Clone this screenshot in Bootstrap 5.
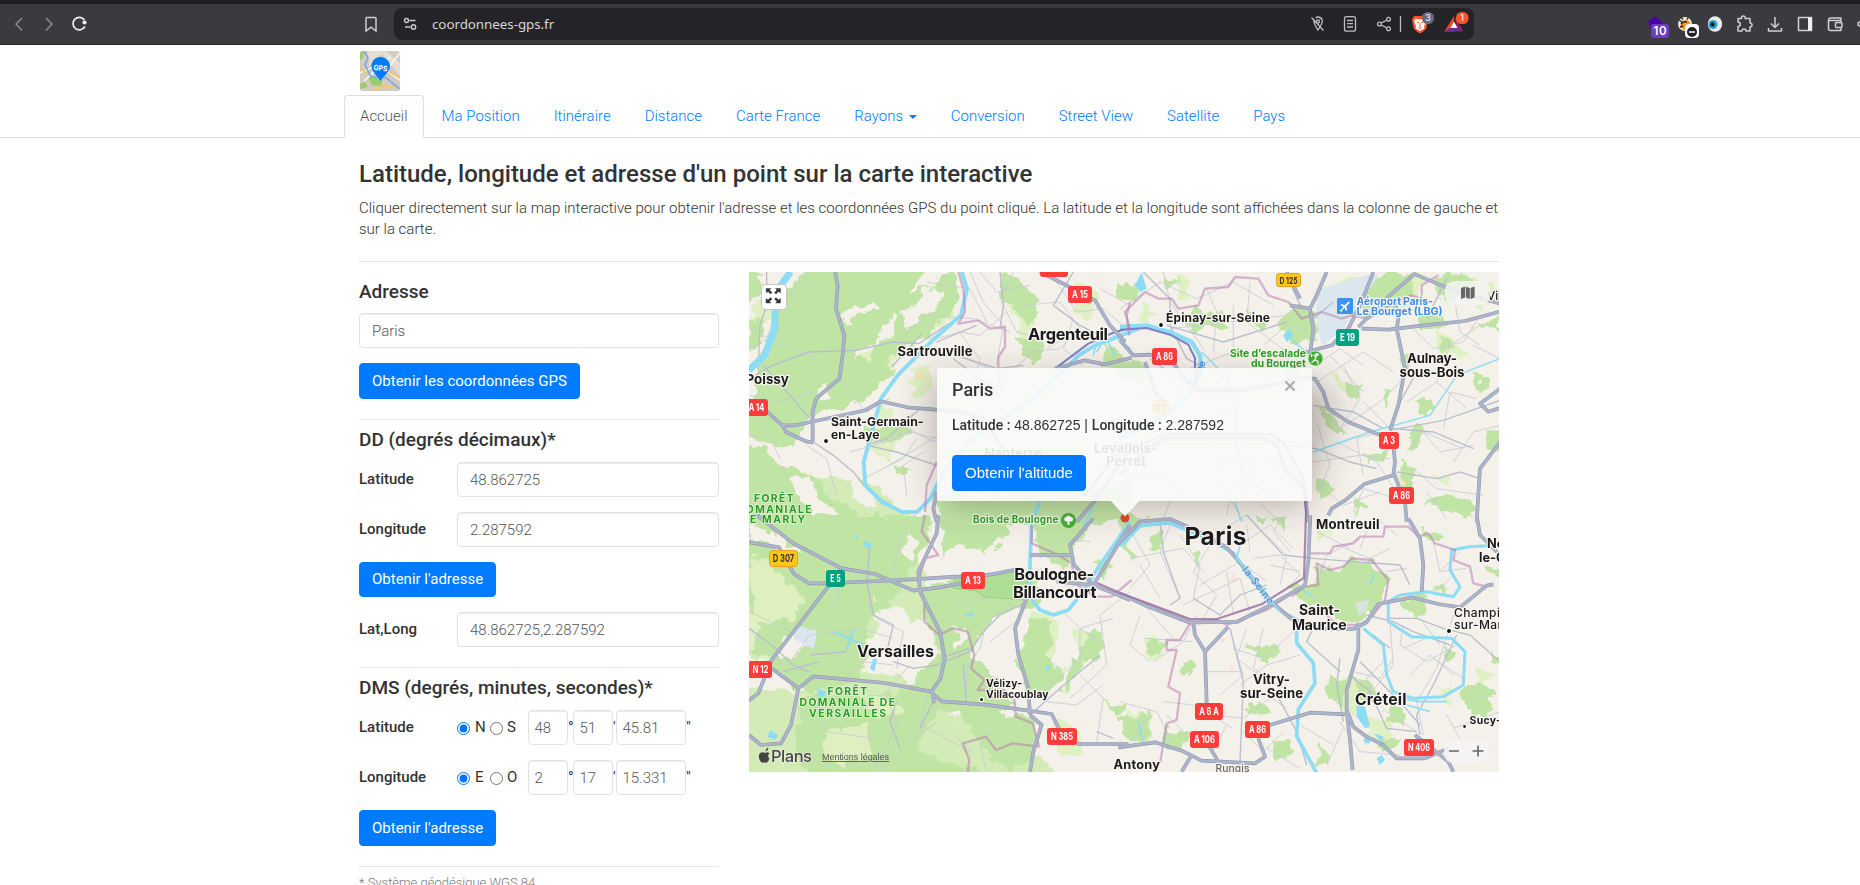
<!DOCTYPE html>
<html lang="fr">
<head>
<meta charset="utf-8">
<meta name="viewport" content="width=device-width, initial-scale=1">
<title>Coordonnées GPS</title>
<link href="https://cdn.jsdelivr.net/npm/bootstrap@5.3.0/dist/css/bootstrap.min.css" rel="stylesheet">
<style>
html,body{height:885px;overflow:hidden}
body{font:300 15px/21px Roboto,sans-serif;color:#333;background:#fff}
.browser{height:45px;background:#3b3a3f;border-top:4px solid #1f1e23;border-bottom:1px solid #2b2a2f}
.browser svg{display:block;flex:none}
.urlbar{width:1080px;height:32px;background:#242328;border-radius:8px;color:#d6d5da;font:400 13.4px/32px "Noto Sans",sans-serif}
.site{width:1170px;max-width:1170px;padding:0 15px;margin-left:344px}
.tabs{border-bottom:1px solid #ddd;height:93px;padding-top:6px}
.tabs .nav{margin-left:-15px;height:43px;border:0}
.tabs .nav-link{border:1px solid transparent;border-radius:4px 4px 0 0;padding:10px 15px;height:43px;margin:0 2px 0 0;color:#007bff;line-height:21px;white-space:nowrap}
.tabs .nav-link.active{color:#555;background:#fff;border-color:#ddd #ddd #fff}
.caret{display:inline-block;border:4px solid transparent;border-top-color:#007bff;border-bottom:0;margin-left:2px;vertical-align:2px}
h1{font-size:24px;line-height:26px;font-weight:500;margin:23px 0 11px}
h2{font-size:19px;line-height:20px;font-weight:500;margin:0 0 12px}
.rule{height:1px;background:#e5e5e5;margin:20px 0 10px}
.form-control{height:35px;border:1px solid #e2e2e2;border-radius:4px;padding:6px 12px;font-size:15px;font-weight:300;line-height:21px;color:#555;box-shadow:inset 0 1px 1px rgba(0,0,0,.075)}
.form-control.dms{padding:6px 5.5px}
.btn-primary{--bs-btn-bg:#007bff;--bs-btn-border-color:#007bff;--bs-btn-padding-x:12px;--bs-btn-padding-y:0;--bs-btn-font-size:15px;--bs-btn-border-radius:4px;--bs-btn-font-weight:400;height:35.4px;line-height:31px;display:block}
.line{height:35px;margin-bottom:15px}
.line label{width:98px;font-weight:500;line-height:34px;height:35px}
.line input[type=radio]{width:13px;height:13px;margin:2px 0 0;flex:none}
.line span{font-weight:400;flex:none;line-height:35px}
.mapbox{width:750px;height:500px;margin-top:10px;overflow:hidden}
.mapbox>svg{display:block}
.popup{left:188px;top:96px;width:375px;height:133px;background:rgba(250,250,250,.91);border-radius:4px;padding:12px 15px;font:14px/20px "Liberation Sans",sans-serif;color:#333}
.popup b{font:500 14px Roboto,sans-serif}
.popup .ttl{font:500 18px/20px Roboto,sans-serif;margin-bottom:15px}
.popup .btn{width:134px;padding:0;font:15px/32px "Liberation Sans",sans-serif;margin-top:20px;height:36px}
.full{left:11.5px;top:11.5px;width:26.5px;height:26.5px;background:#fff;border:1px solid #c4c4c4;border-radius:4px}
.full svg{margin:-.5px 0 0 -.8px}
.pill{width:45px;height:24px;border-radius:9px;background:rgba(245,245,243,.86)}
.brandline{left:8px;top:474px}
svg text{font-family:Inter,"Noto Sans",sans-serif}
.lab text{fill:#1b1b1d;font-weight:650;stroke:#f8f5f0;stroke-width:2.4px;stroke-linejoin:round;paint-order:stroke}
.lab .wood{fill:#289b22;font-weight:700;stroke:#e8f6da;stroke-width:1.6px}
.lab .poi{fill:#2f9d27;stroke:#f2f9e9}
.lab .air{fill:#3d8eea}
.shield text{fill:#fff;font-size:10.4px;font-weight:700;text-anchor:middle}
</style>
</head>
<body>
<header class="browser d-flex align-items-start">
<svg width="394" height="40" viewBox="0 4 394 40" fill="none">
<g stroke="#8a898e" stroke-width="1.5"><path d="M22 18l-6 6 6 6.500M46 18l6 6-6 6.500"/></g>
<path d="M84.500 20a6.300 6.300 0 1 0 .4 6.500" stroke="#eee" stroke-width="1.7"/><circle cx="84.500" cy="22.500" r="2.100" fill="#eee"/>
<path d="M366.500 17.500h8.500q1 0 1 1v12.500l-5-3.800-5 3.800v-12.500q0-1 .5-1z" stroke="#d0cfd4" stroke-width="1.500"/>
</svg>
<div class="urlbar d-flex" style="margin-top:4px">
<svg width="38" height="32" viewBox="394 8 38 32" fill="none" stroke="#c9c8cd" stroke-width="1.400"><circle cx="406.500" cy="20.500" r="2"/><path d="M409.500 20.500h6M405 27h5.500"/><circle cx="413.500" cy="27" r="2.200"/></svg>
<span style="letter-spacing:-.06px">coordonnees-gps.fr</span>
<svg class="ms-auto" width="174" height="32" viewBox="1300 8 174 32" fill="none">
<g stroke="#bcbbc0" stroke-width="1.300"><path d="M1311.500 17.500l12 13M1314 19q-1 4 4 11 5-7 4.200-10-1-3-4.200-3-1.500 0-2.500.7"/><circle cx="1318" cy="21.500" r="1.500"/><rect x="1344.500" y="16.700" width="11" height="14.500" rx="2"/><path d="M1347 20.500h6M1347 23.700h6M1347 27h6"/><circle cx="1379.500" cy="24" r="1.900"/><circle cx="1388.500" cy="19.300" r="1.900"/><circle cx="1388.500" cy="28.700" r="1.900"/><path d="M1381.200 23l5.500-2.800M1381.200 25l5.500 2.800M1400.500 16v16"/></g>
<path d="M1414 16h11l3 3.500-1.500 8.500q-2 3.500-6.500 5.500-4.500-2-6.500-5.500l-1.500-8.500z" fill="#fb542b"/><path d="M1415.500 18.500l4.500 1 4.500-1 1.500 3-2 5 .5 2-4.500 2.500-4.500-2.500.5-2-2-5z" fill="#fff"/><path d="M1417 22l2 .8M1423 22l-2 .8M1420 23v4M1418.500 27.500l1.500 1 1.500-1" stroke="#fb542b"/>
<rect x="1422" y="12" width="12" height="12" rx="5.500" fill="#66697a"/><text x="1428" y="21.300" font-size="9" fill="#fff" text-anchor="middle">3</text>
<path d="M1454 16l-9.500 15.500h9z" fill="#ff4724"/><path d="M1454 16l9.500 15.500-6-3z" fill="#9e1f63"/><path d="M1444.500 31.500l5-3.500h8l6 3.500z" fill="#662d91"/><path d="M1454 21.500l-3.500 6.500h7z" fill="#fff"/>
<rect x="1456" y="12" width="12.500" height="12" rx="5.500" fill="#fb542b"/><text x="1462.200" y="21.300" font-size="9" fill="#fff" text-anchor="middle">1</text>
</svg>
</div>
<svg class="ms-auto" width="230" height="40" viewBox="1630 4 230 40" fill="none">
<path d="M1655 16l8.500 7h-2v5h-12v-5h-2.500z" fill="#4b00a8"/><rect x="1651" y="24" width="18" height="14" rx="3" fill="#6b3fc0"/><text x="1660" y="35.400" font-size="11.500" font-weight="600" fill="#fff" text-anchor="middle" textLength="13">10</text>
<circle cx="1685" cy="24" r="7" fill="#eceae5"/><circle cx="1685.500" cy="25" r="5" fill="#f0941f"/><path d="M1679 20l3 2M1681 17.500l2 2M1688 17.500l-1 2M1680 27l3-1M1681 24q2-3 6-2" stroke="#2b2523" stroke-width="1.400"/><rect x="1685" y="24" width="14" height="14" rx="4" fill="#fff"/><circle cx="1692" cy="32" r="5" fill="#222"/><path d="M1689 32h6" stroke="#fff" stroke-width="1.500"/>
<ellipse cx="1715" cy="24" rx="7.200" ry="7.800" fill="#e9ebec"/><circle cx="1713" cy="24.500" r="4.600" fill="#27a5dc"/><circle cx="1712.500" cy="24.500" r="2.200" fill="#10202b"/>
<g stroke="#d0cfd4" stroke-width="1.500" stroke-linejoin="round"><path d="M1738 18.500h3.500q-.3-2.500 1.800-2.500t1.800 2.500h4.900v4.500q2 0 2 2t-2 2v4h-4q0-2-2-2t-2 2h-4v-4.500q2.300-.2 2.300-2.200t-2.300-2.200z"/><path d="M1775 17v10.500m-4-4l4 4 4-4M1768.500 28v3h13v-3"/><rect x="1798.500" y="17.500" width="13" height="13"/><path d="M1841 20v-2h-10q-2.500 0-2.500 2v8.500q0 2 2 2h10.500v-2.500M1829 20.500h12v3"/><rect x="1835.500" y="22.500" width="6.500" height="5" rx="1"/><circle cx="1860" cy="24" r="2"/></g><rect x="1808" y="17.500" width="4" height="13" fill="#f0f0f0"/>
</svg>
</header>
<div class="tabs">
<div class="container site">
<svg class="d-block" width="41" height="40" viewBox="0 0 41 40" style="margin:0 0 4px 1px"><defs><clipPath id="r"><rect width="40" height="40" rx="3"/></clipPath></defs><g clip-path="url(#r)" fill="none"><path fill="#d3cbbf" d="M0 0h41v40H0z"/><path fill="#e5ded2" d="M8 0h18l14 12v13L22 3 9 15z"/><path fill="#9ccb6b" d="M8 27l7-2 8 3-2 7-9-1zM0 33l5-2 3 5-8 2zM0 0h4l-1 7-3 2z"/><path stroke="#fff" stroke-width="1.300" d="M40 2L24 22M0 22l18-8 23 16M4 30L30 6"/><path stroke="#f5c859" stroke-width="1.600" d="M0 17l9 7M29 21l12 6M14 39l9-4h10l8 2"/><path stroke="#7ba8ee" stroke-width="1.700" d="M4 0l4 7-3 7 6 12 14 0 15 12"/></g><path fill="#007bff" d="M20.500 6c5.500 0 9.500 4 9.500 9 0 6-7 10-9.500 15C18 25 11.500 21 11.500 15c0-5 3.500-9 9-9z"/><text x="20.500" y="19.600" font-size="7.500" font-weight="700" fill="#fff" text-anchor="middle" textLength="14" lengthAdjust="spacingAndGlyphs" transform="rotate(6 20 17)">GPS</text></svg>
<ul class="nav nav-tabs flex-nowrap">
<li class="nav-item"><a class="nav-link active">Accueil</a></li><li class="nav-item"><a class="nav-link">Ma Position</a></li><li class="nav-item"><a class="nav-link">Itinéraire</a></li><li class="nav-item"><a class="nav-link">Distance</a></li><li class="nav-item"><a class="nav-link">Carte France</a></li><li class="nav-item"><a class="nav-link">Rayons <i class="caret"></i></a></li><li class="nav-item"><a class="nav-link">Conversion</a></li><li class="nav-item"><a class="nav-link">Street View</a></li><li class="nav-item"><a class="nav-link">Satellite</a></li><li class="nav-item"><a class="nav-link">Pays</a></li>
</ul>
</div>
</div>
<main class="container site">
<h1>Latitude, longitude et adresse d'un point sur la carte interactive</h1>
<p class="m-0">Cliquer directement sur la map interactive pour obtenir l'adresse et les coordonnées GPS du point cliqué. La latitude et la longitude sont affichées dans la colonne de gauche et sur la carte.</p>
<div class="rule mb-0" style="margin-top:21px"></div>
<div class="row" style="--bs-gutter-x:30px">
<div class="col-4">
<h2 style="padding-top:20px;margin-bottom:11px">Adresse</h2>
<input class="form-control" style="margin-bottom:15px" value="Paris">
<button class="btn btn-primary" style="height:36px">Obtenir les coordonnées GPS</button>
<div class="rule"></div>
<h2>DD (degrés décimaux)*</h2>
<div class="line d-flex"><label>Latitude</label><input class="form-control flex-fill w-auto" value="48.862725"></div>
<div class="line d-flex"><label>Longitude</label><input class="form-control flex-fill w-auto" value="2.287592"></div>
<button class="btn btn-primary" style="margin-bottom:15px">Obtenir l'adresse</button>
<div class="line d-flex mb-0"><label>Lat,Long</label><input class="form-control flex-fill w-auto" value="48.862725,2.287592"></div>
<div class="rule"></div>
<h2>DMS (degrés, minutes, secondes)*</h2>
<div class="line d-flex align-items-center"><label>Latitude</label><input type="radio" name="ns" checked><span style="width:20px;padding-left:5px">N</span><input type="radio" name="ns"><span style="width:25px;padding-left:4px">S</span><input class="form-control dms" style="width:40px" value="48"><span style="width:5px">°</span><input class="form-control dms" style="width:40px" value="51"><span style="width:3px">'</span><input class="form-control dms" style="width:70px" value="45.81"><span>"</span></div>
<div class="line d-flex align-items-center"><label>Longitude</label><input type="radio" name="eo" checked><span style="width:20px;padding-left:5px">E</span><input type="radio" name="eo"><span style="width:25px;padding-left:4px">O</span><input class="form-control dms" style="width:40px" value="2"><span style="width:5px">°</span><input class="form-control dms" style="width:40px" value="17"><span style="width:3px">'</span><input class="form-control dms" style="width:70px" value="15.331"><span>"</span></div>
<button class="btn btn-primary">Obtenir l'adresse</button>
<div class="rule"></div>
<div style="font-size:13px;line-height:12px;color:#777">* Système géodésique WGS 84</div>
</div>
<div class="col-8">
<div class="mapbox position-relative">
<svg width="750" height="500" viewBox="749 272 750 500" fill="none">
<defs>
<filter id="rough" x="-5%" y="-5%" width="110%" height="110%"><feTurbulence type="fractalNoise" baseFrequency=".07" numOctaves="3" seed="4"/><feDisplacementMap in="SourceGraphic" scale="17" xChannelSelector="R" yChannelSelector="G"/></filter>
<filter id="soft" x="-30%" y="-30%" width="170%" height="170%"><feGaussianBlur stdDeviation="17"/></filter>
<g id="main">
<g transform="translate(740 262) scale(.33333)"><path d="M285 30l8 40-5 70 25 80-5 60-10 70-70 60-10 40v90M27 445h50l50 45h40l210-45 45-27 80 18 150 12 75 20 60 90M128 490l10 20 60 28 22 4M590 690l-10 50 10 40M900 30l110 55 55 30 45 75 45 50M945 320l90-25 60 12 80-20M1170 560l-100 150-60 70"/></g>
<g transform="translate(1120 262) scale(.33333)"><path d="M0 235l40 45 50-2 60 12 60 80 30 15h130l170-35 45 0 25 40 15 50 60 40 110 45 25 25 5 50-5 40-85 25-60 50-40 25-10 20M620 30l-30 70-20 40-60-10M540 110l-40-80M570 142l10 60-8 60M725 200l80 3 100-12 130-14 105-28M820 110l15 60-5 30 25 120-20 110-25 75M760 30l-35 90-40 80-50 50-110 30M885 35l-70 60-100 100M880 35l120 50 140 40M1140 380l-60 45 25 24 32-10M820 630l35 90 5 60M1140 540l-60 80-10 160M0 640l60-60 70-50h300l40 20 30 80 55 50 8 100M75 300l35 100 20 10"/></g>
<g transform="translate(740 515) scale(.33333)"><path d="M27 82l90 15 45 80 45 28h40l170-7 100-5 130-8h60l65-10 60-12M50 0l110 85 145 75 100 17 115 50 80-10 130-25M300 165l-40 55-165 215-40 100-30 22M95 460l80 60-22 110-30 55-60 5-36-30M175 520l45-36 215 20 135 25 35 30 130 10 130 18 70 10 20 40 25 30 35 20h150M595 0l-5 55-55 115 5 60 60 120 14 80-12 60-25 35 5 40M870 600l35 30-25 80-10 60M860 250l-35 90 10 80 30 100 5 80M1170 30l-110 180-110-10M1060 10l-70 80 12 60 58 60 110 45M870 120h130"/></g>
<g transform="translate(1120 515) scale(.33333)"><path d="M0 80L60 20l90-8 80 35 90 50 60 70 80 100 55 45 85 30h100l40-20 35-55 100-20 80 20 65 10 80-65 20-4M0 235l80 38 130 50 80-2h60l90-45 115-65 10-70 6-140M220 320l5 40 30 50 5 150v40M325 335l-70 75M715 325v80l-35 120v60l20 50 40 30 50 25 40 40h85l70-30M680 585l10 90 8 90M450 630l120-37 105 5M415 670l20 55-30 20-160-8-60-30-80-25-110 15M265 690l30 50M865 10l35 60 10 80-5 80M1070 0l10 60 60 60M885 660l100 80 15 30M215 720l-30 50"/></g>
</g>
</defs>
<path fill="#f4f0ea" d="M749 272h750v500H749z"/>
<g filter="url(#rough)" fill="#dff0c2">
<path d="M735 480h130l40 30 25 20-10 30 10 60-50 12-45 20-50-20-30 30-20-20zM735 690h60l40-20 60 5 60 40 70 15 30 50H735z" fill="#d3ebb6"/>
<g transform="translate(740 262) scale(.33333)"><path d="M60 60l60 30-20 90-60 20zM340 290l80-40 60 30-80 100-80 20zM520 310l50 10 10 50-60 40zM400 430l60 20-30 60zM780 90l50 20 60 80-30 40zM1010 60l70 40-30 70-60-20zM600 90l50 0-10 90-50 20zM420 480l60 50-30 60-60-20zM0 560h60l30 60-60 30z"/></g>
<g transform="translate(1120 262) scale(.33333)"><path d="M610 80l80-40 50 10-30 90-80 40zM790 60l70-30 60 20-50 80-80 20zM160 40l50 20 0 60-40-20zM540 200l40 20-10 40zM930 200l60 30 60 60-90-20zM620 330l50 20 10 60zM1000 50h80l60 40-60 60zM940 640l60 0-10 40zM60 120l50 40-40 20z"/></g>
<g transform="translate(740 515) scale(.33333)"><path d="M20 60l90 80 90 80 60 60-50 130-110 50-90-80zM420 270l60 0 20 60-50 20zM880 280l80 40-20 110-70-10zM1000 330l70 50-20 80zM620 420l60 0 20 60zM930 620l90 20 0 70-60 20z"/></g>
<g transform="translate(1120 515) scale(.33333)"><path d="M70 370l70 0 0 60-60 10zM20 580l80 20 0 70-80 10zM620 500l70-20 60 80-60 50zM840 240l80-10 0 60zM1060 460l70 20-50 30zM740 600l80 30-10 60-60-20zM960 520l50 10-30 40zM600 30l30 20-30 40z"/></g>
</g>
<g filter="url(#rough)" fill="#c0e4a4">
<g transform="translate(740 262) scale(.33333)">
<path d="M240 0h340l-50 70-100 130-20 45-60 20-40 80-50 60-60 90-50 70-130-40-50-70 70-60 20-100 40-110 10-90zM170 440l60-60 120-100 110 40-70 80-130 50zM0 560l70-10 40 60 120 30 30 60 60 30 80 60H0zM480 110l90-40 70-40 20 90-90 100-110 60-60 80-50 0 60-110 50-30zM380 500l70-20 60 20-50 40-70 0zM780 30l70 30 40 70-30 60-80-90zM0 30l70 10-30 70-40 10zM30 180l50 10-20 60-40 20zM830 210l50 20 40-10-20 70-30 20zM700 340l60 20 10 40-50 10zM470 600l50 20-20 30-40-10zM600 700l300-10 150 20 120-60v130H600zM1090 260l60 20 20 60-80-30z"/>
<path fill="#f4f0ea" d="M300 160l50-40 80 10-70 20-40 30zM480 150l50-20 40-60 40 10-20 60-60 30-40 40zM230 390l20-20 20 40-30 10zM150 660l60-20 20 60 60 50-70 20zM330 640l60 40 20 60-60-20z"/>
</g>
<g transform="translate(1120 262) scale(.33333)"><path d="M0 60l60 20-30 40-30-10zM130 40l40 20-30 20zM190 170l40-30 80 20 20 40-60-10-40 20zM380 150l40 10 20 40-50-10zM470 180l70-50 60 20-10 80-80 20zM730 80l60-50h90l-10 70-90 60-60 20zM920 50l80-20 70 30-20 40-90 10zM880 140l60 10 50 40-80 20zM840 270l30 20-10 60zM600 100l50-10 10 40zM680 360l40 10-10 40-40-20zM780 380l40 20-20 40zM880 420l40-10 30 30-40 20zM600 440l60 30 10 50-50-30zM880 490l20 10-10 60-20 10zM730 580l60-20 10 30-50 20zM840 600l50 20-20 80-20-20zM960 220l40 30-30 30zM1050 330l60 30-20 40zM910 720l40-20 100 10 30 50-120-20zM1090 500l50 10v60h-30zM590 650l50 20-40 50zM700 700l40 30-30 30zM490 320l60 10-10 50-40-10zM20 300l60 20-10 50-60-20zM1080 180l60-20v60z"/></g>
<g transform="translate(740 515) scale(.33333)">
<path d="M0 0h560l10 90-60 80-60 100-80 60 20 90-40 80-130 30-100-40-30-120-90-130-40-30zM540 230l80-30 180-20 90 20 10 60-100 30-90 80-30 70-70 0-40-90zM590 420l70-10 100 60 60 100-80 30-140-20-40 60-80-10 20-100zM200 540l180 0 120-20 60 80-30 100 110 50h90l-10 60H270l-90-60-20-100zM100 200l160 30-70 110-80 90-80-10zM870 0h180l-10 50-60 110-90-50zM600 0h220l-20 60-70 60-90-30-30 40zM880 310l60 10-20 100 50 60-70 70-50-40-20-100zM650 580l120 10 120 30v110l-90 40-70-60-40-80zM1040 360l60-20-20 90-60 20zM1060 130l50 20-20 40zM990 430l40 20-60 90zM1090 560l60 10-10 40z"/>
<path fill="#dff0c0" d="M30 120l60 20 50 70 60 40-50 60-110 20zM250 650l120-20 30 90-90 40-70-40zM380 540l90 10 10 50-70 10z"/>
<path fill="#f4f0ea" d="M30 30l70 20 80 60-60-10-90-30zM430 280l50-10 40 50-20 50-50 10-40-60zM470 400l100-20 30 50-90 60-60-30zM100 400l80-60 50 50-90 40zM640 330l50 30-40 50zM480 110l30-60 30 20-20 60zM740 390l40-30 40 50-50 20z"/>
</g>
<g transform="translate(1120 515) scale(.33333)"><path d="M590 150l40 15 40-10 20-20 60 5 50 50-5 50-40 50-40 30-70 0-60-50-70-30-10-30 70 0zM0 30l20-30 60 10-60 50zM90 60l30-10 10 50-30 10zM210 120l30-10-10 40zM450 20l50-10-10 40zM0 60l60 60-20 10-50-30zM80 380l60-10-10 50-50-10zM380 390l50 10 50-10 10 20-60 30zM370 580l60-20 20 30-60 10zM0 610l90-20 10 60-50 30-50-10zM130 640l80 20-30 50-50-20zM620 480l60 10-10 80-50-20zM700 490l60 10 20 60-50 10zM850 250l60-10 10 50-50 10zM930 200l50 10-10 40zM1020 530l50-30 50 20-20 90-60-20zM1090 150l50 10v50zM460 680l50-10 10 50-50 20zM600 690l40 30-10 40h-50zM780 660l60 10-20 50-60-20zM820 560l40 20-10 50-60-10zM900 40l60 20-20 20zM180 440l40 10-20 40zM400 0l40 10-20 20zM980 400l30 20-30 10zM1100 400l40 30v20z"/></g>
</g>
<path fill="#aedd96" stroke="#8fcd7c" stroke-width=".8" d="M955 577l57-5 16 8-4 20-40-3-8-6-23-3z"/>
<path fill="#dbe6ef" d="M1317 290l50-15 12 0-35 53-22 18-6-28zM795 625l22 6-3 18-20-10z"/>
<path fill="#dbe1de" d="M1355 602l14-2-2 10-8 6z"/><path fill="#fbe0de" d="M1232 572l7 8-9 4zM1218 637l8 2-4 5zM1230 665l5 2-4 6z"/><path fill="#fbe2b9" d="M915 376l8-6 1 8zM1396 475l10 8-2 4zM1470 325l6 2-4 6zM873 594l4 8h-4z"/>
<g stroke="#c7cbd5" stroke-width=".8">
<g transform="translate(740 262) scale(.33333)" stroke-width="2.500"><path d="M27 200l200 90M0 290l80-60 20-60M210 30l-60 70-90 20M300 350l70 90 80-30M650 200l70 90-20 70M690 30l40 90 60 70-20 120M820 30l-40 80 50 100 80 20M850 130l110-10 60 80-100 60M650 280l150 60 70-60M480 230l80-70 140 10 110 40M560 60l130 20 50 100M400 540l110-30 80 20M430 620l100-60 60-40M370 650l120-60 40-60M500 700l-10-90 60-40M640 500l-60 40-110-60M950 60l60 90 80-10 70 60M1000 170l-30 90 60 50M200 550l60 40 30 110M30 400l90 20 100-30M60 470l60 120M1170 130l-90-50M860 270l100-10 60-60M330 570l140-40 50-80M720 30l50 60 100-20M590 230l70-20 60 10 80-70"/></g>
<g transform="translate(1120 262) scale(.33333)" stroke-width="2.500"><path d="M0 140l120-80 110 50 110-50 120 70M130 30l20 90 100 140M260 80l30 70-10 120M340 130v140l-160 60M390 60l-10 120 120 90M150 200l350-40M430 250l70-60 70 20M590 360l140-90 90 60M600 380l60 120 120-80 90-90M660 500l60-90-50-100M730 420l80 80M860 420l90-60 40-110 90-60M950 360l90 80M880 200l60 60 90-20 50-80M900 200l20-90M1000 90l20 120 60 40M910 510l50 60 100-20M650 540l120 60 60 90M580 600l140-20 90 10M590 660l80 70 110-40M700 750l30-70 100 30M880 620l70 60 140 20M920 690l60 80M730 640l-20-110 70-20M590 480l40 130-30 70M600 300l60-40 70 50M1000 600l60-90 80-20M860 570l50-60 120 50M630 280l100 110M1060 250l80 40M970 500l20-110 80 20M0 350l120-20 60 60M30 400l90 20 60 80 120-20M190 340l-30 110-80 60M220 540l60-80 100-10 100 80M350 480l20 90 140 60M280 540l60 120-20 100M250 620l130-30 90 90M290 640l80 140M0 640l120-10 70 70M160 690l-30 80M400 580l-20 110 90 80"/></g>
<g transform="translate(740 515) scale(.33333)" stroke-width="2.500"><path d="M380 80l10 200 20 30 80 40-20 110M490 30l20-30M500 40l-30 70-10 70M150 440l60-80 150-20 100 30M200 350l90-90 10-90M310 500l60-60 90 10M430 540l80-90M230 580l30 70 140 20M560 540l-20 90 60 30 90 50M440 540l30 90-70 140M680 540v-80l40-60 20-80 80-60M750 380l90-70M640 280l100-30M900 130l60-60 90 10M900 160l90 60 60-40M1170 230l-90 70 20 150-110 100M970 290l50 50v90l-110 100M1080 380l-60-40 100-30M1020 480l70 70-20 130M920 560l90 10 80-60M30 290l120 60M40 360l90 90M800 560l-60-90M780 620l-60 70 20 80M590 620l-80 60-90 90M640 660l60 50"/></g>
<g transform="translate(1120 515) scale(.33333)" stroke-width="2.500"><path d="M40 60l50 90-60 70M60 150l60 100M30 130l160-30 60 70M150 30l-30 80 60 140M180 60l60 90-20 100M270 90l-50 80 70 70-40 70M240 210l120-70 80 60M190 270l170-80 30 100M320 170l20 130M300 50l80-50M360 90l90-60 70 70M400 130l80-10 60 60-50 50M440 60l60 60-20 90M490 0l-30 50 50 60M450 150l90 20M380 30l10 80M60 300l-30 90 60 50M70 370l150 10M80 280l80 90M100 440l90-60 40-80M380 340l-30 90 80 60M430 340l-30 120 90 60M340 400l90 30 90-80M360 510l80-60 100-30M300 540l70-60-30-90M250 470h110M280 600l90 10 80-60 90-20M320 630l-40 80M360 640l70 70 60-60M440 540l60 40M600 180l20-60 100-50M650 90l100 40 60-30M720 100l30-80M590 50l100 50M830 60l-60-50M800 170l60-10M850 330l-10 60 80 50 90-50M810 330l10 120-80 100M900 310l60 80M850 400l90-40M870 480l60-60 70 60M1000 300l-50 160-60 100 20 100M940 430l90 60M940 80l20 90 80-10M960 170l60-60M1000 180l-60 60M700 470l80 20 40-60M760 550l-20-60 60-60M730 510l70 80 90 60M660 620l60 90 120 10M640 690l-100-60M620 750l50-110M440 700l100 60M130 560l90 10 120 70M140 600l60 60M30 680l60-80M0 560l110 30 40 80M1000 640l140-50M980 600l50 90M1040 560l60-20"/></g>
</g>
<g stroke="#b9bece" stroke-width="4">
<g transform="translate(740 262) scale(.33333)"><path d="M27 350l70-40 110-40 140-5 110-25 80 5 90-60M70 310l80 90 60 70M80 30v100l-20 60-5 130M220 540l60 40 60 50 50 60 80 50M590 440l-50 0-100 90-60 20M545 215l-90 100M780 30l10 100-10 70M650 280l120 40 80-10M1000 30l-60 100 80 60 80 40M640 290l120 90M590 240l120-50M380 550l90 20 120 40"/></g>
<g transform="translate(1120 262) scale(.33333)"><path d="M70 30l80 80v80l50 100 120 60 30 100v150M140 190l170 50 190-60M500 40l40 90M580 430l120 20 90 50M810 505l160-30 170-60M820 500l120 10 120 50M830 440l60-110M500 550l90 10 100 40 80 20M830 630l120 20 70-20 60 20M640 120l-60 50M980 50l-60 120M90 290l100 70M350 540l20 110 90 50"/></g>
<g transform="translate(740 515) scale(.33333)"><path d="M390 100l-10 100 20 100 60 30-20 80M210 420l110-10M130 470l110-30M27 340l80 60 50 50 50 20M460 440l60 20 70-10 100-40 40-60 50-50 80-40M680 570l-10-120M870 600l90-80 120-100M600 430l90-30M540 640l40-80M1070 650l50 20M470 560l-20 60 30 80"/></g>
<g transform="translate(1120 515) scale(.33333)"><path d="M120 20l10 90 50 140-30 20M380 0l110 120 90 10 120 10 140 10 30 60M220 250l80 50 60-60 80-30M590 320l-30 60 100 90M740 300l80 20 60 30 110 40M800 310l90 0 80 30 80 20 90 80M690 480l60 50 50 110 90 10M460 520l70 130 30 100M330 340l40 160-10 240M760 360l50 40M660 430l-10 80 20 110M720 440l60 60 60 60 60 70M1010 360l-70 150-50 90 10 60"/></g>
</g>
<g stroke="#8ddcf6" stroke-linejoin="round">
<g transform="translate(740 262) scale(.33333)"><path stroke-width="21" d="M152 30l-45 60-3 110-30 80-48 45"/><path stroke-width="12" d="M665 30l16 50-18 80-80 70-110 110-50 70-22 80-30 110 5 70 50 50 60 30 45 0 40-40 45-90 70-80 180-120 90-80 60-60 50-30 130-50"/><path stroke-width="5" d="M1070 240l-10 40M1095 220l30 60M1120 220l50 40M1100 220l-30 50"/></g>
<path d="M945 320l100-75 80-35 60-15" transform="translate(740 262) scale(.33333)" stroke="#7e7fc4" stroke-width="6"/>
<g transform="translate(1120 262) scale(.33333)"><path stroke-width="13" d="M0 195l80-5 70 20 65 30 25 40 5 50-40 70-60 50-60 40-90 40"/><path stroke="#7e7fc4" stroke-width="6" d="M0 203l80-5 70 20 55 30 20 40 0 40"/><path stroke-width="4" d="M245 270l80 80 30 130M345 720l20 60M1140 290l-130 50-80 120-180 50-170 60M500 220l70 60"/><path fill="#8ddcf6" stroke="none" d="M45 70l20-40 15 50-20 10zM490 220l20-20 10 20-20 20z"/></g>
<g transform="translate(740 515) scale(.33333)"><path stroke-width="11" d="M900-40l-25 60-5 120 0 60 10 60 20 25 40 15 45-15 40-50 55-85 90-130"/><path stroke-width="6" d="M280 350l90 40M340 345l-20 60M1060-20l-30 50 10 10"/><path stroke="none" fill="#8ddcf6" d="M340 60h15l-5 15zM375 75l20 15-5 12-18-10zM670 300l30-10-5 15zM390 460l10-30 12 3-10 37zM90 645l25 15-10 15-22-10zM230 520l30 10-20 30zM920 450h10v15h-10z"/></g>
<g transform="translate(1120 515) scale(.33333)"><path stroke-width="11" d="M0 92L60 32l90-8 110 45 80 45 45 65 65 80 50 40 30 15 0 70 50 60 5 60-50 80-5 80 60 110 40 30"/><path stroke-width="9" d="M1140 90l-90 5-55 10-5 60 30 50-20 30-80-15-80 10-35 20 0 60 70 45 120 5 40 40-5 100-60 35-90 5-60-20-20-50-10-90-60-50"/><path stroke-width="5" d="M840 550l60 10 80 0M860 570l70 20M55 620l15 60M540 220l40 25M350 130l10-40M760 180l-10 30"/><path stroke="none" fill="#8ddcf6" d="M710 570l25 5 15 60-15 5-25-35zM770 730l15-10 10 15-15 15zM730 670h20v15h-15zM760 655l30 10-5 15z"/></g>
</g>
<g stroke="#b876b0" stroke-width="7" stroke-opacity=".5" stroke-linejoin="round">
<g transform="translate(740 262) scale(.33333)"><path d="M655 30l15 50 5 70-20 35 60-10 35 25 45-5v60l-20 30v50l10 50M1170 120l-10 40 8 60M590 600l-30 70-5 80"/></g>
<g transform="translate(1120 262) scale(.33333)"><path d="M30 200l-15-50 60-60 40 20h40l20 30 60-10 20-50 70-5 20-30 70 5 30 50 60 20 40 50 60-20 60 20 30-10 50 10 80-50 50-20 30 10 0-40 50-30"/></g>
<g transform="translate(740 515) scale(.33333)"><path d="M555 0l-10 50 50 70-40 10-20 70 18 60 0 60 45 40 40-20 45 10 20 70-10 40 40 35-20 30 80 0 30 30 5 50 50 20 20 70-80-10-50 20-30-40-70 20 20 50-10 80-50-10-50 20-60 50M875 30l0 55 70 30 50 30 10 60 60 40h50l60-50"/></g>
<g transform="translate(1120 515) scale(.33333)"><path d="M570 115h60l10-20 60-10 20-20 70 0 5-30 70 0 30 30 30-10 20 30 60 20-5 30 50 20 10 50 40 10M515 245l40-30 40-5-5-65 40 20 40-10 25-25 60 5 50 60-10 60-40 50-35 25h-70l-30-30M0 235l220 85 75-5 25 15 120-45 100-65M210 325l-30 50-40 0v30h30l-25 110 35 20-10 80-30 10-20 120"/></g>
</g>
<use href="#main" stroke="#8d98b3" stroke-width="11" stroke-linejoin="round"/>
<use href="#main" stroke="#aeb5ca" stroke-width="7.500" stroke-linejoin="round"/>
<path d="M1124 544l17-19 28-3 26 10M1236 557l18 22 26 33" stroke="#8ddcf6" stroke-width="2"/>
<g stroke="#93669c" stroke-opacity=".75" stroke-width="2.200"><path d="M1097 583l23 10 70 26 27 0 45-15 42-26 2-66-3-35-19-33-12-10H1165l-50 22-30 40"/></g>
<circle cx="1125" cy="518" r="4.500" fill="#e0482d"/>
<g class="lab">
<text x="1028" y="339.700" font-size="16.500" textLength="80">Argenteuil</text><text x="897.500" y="355.500" font-size="13" textLength="75">Sartrouville</text><text x="745.500" y="383.500" font-size="13.500" textLength="43.500">Poissy</text><text x="831" y="425.500" font-size="12.200" textLength="92.500">Saint-Germain-</text><text x="831" y="438.700" font-size="12.200" textLength="48.500">en-Laye</text><text x="1166" y="322" font-size="12" textLength="104">Épinay-sur-Seine</text><text x="1407" y="363.300" font-size="13.300" textLength="50">Aulnay-</text><text x="1399.500" y="376.800" font-size="13.300" textLength="65">sous-Bois</text><text x="1487" y="300" font-size="11.500" style="font-weight:500">Villepinte</text>
<text class="air" x="1356.500" y="304.500" font-size="10.800" textLength="76.500">Aéroport Paris-</text><text class="air" x="1356.500" y="315.200" font-size="10.800" textLength="86">Le Bourget (LBG)</text>
<text class="poi" x="1230" y="356.500" font-size="10.600" textLength="76">Site d’escalade</text><text class="poi" x="1251" y="367" font-size="10.600" textLength="55">du Bourget</text>
<text class="poi" x="973" y="523" font-size="10" textLength="85.500">Bois de Boulogne</text>
<text class="wood" x="754" y="501.700" font-size="10.300" textLength="39.500">FORÊT</text><text class="wood" x="737" y="512.500" font-size="10.300" textLength="74.500">DOMANIALE</text><text class="wood" x="741" y="523.300" font-size="10.300" textLength="64">DE MARLY</text>
<text class="wood" x="827.500" y="695" font-size="10.300" textLength="39.500">FORÊT</text><text class="wood" x="799.500" y="706" font-size="10.300" textLength="95.500">DOMANIALE DE</text><text class="wood" x="809" y="717" font-size="10.300" textLength="77">VERSAILLES</text>
<text x="1014.300" y="580" font-size="16.500" textLength="80">Boulogne-</text><text x="1013" y="597.500" font-size="16.500" textLength="83.500">Billancourt</text><text x="857" y="656.700" font-size="16" textLength="77">Versailles</text><text x="986" y="686.700" font-size="10.400" textLength="36">Vélizy-</text><text x="986" y="697.700" font-size="10.400" textLength="62.500">Villacoublay</text><text x="1113.500" y="769" font-size="12.800" textLength="46.500">Antony</text>
<text x="1184.500" y="545" font-size="24.500" textLength="62" style="font-weight:750">Paris</text><text x="1316" y="528.500" font-size="13.200" textLength="63.500">Montreuil</text><text x="1299" y="615" font-size="14" textLength="41">Saint-</text><text x="1292" y="630.300" font-size="14" textLength="54.500">Maurice</text><text x="1454" y="616.500" font-size="12" letter-spacing=".4" style="font-weight:500">Champigny-</text><text x="1454" y="629.300" font-size="12" letter-spacing=".4" style="font-weight:500">sur-Marne</text><text x="1487" y="548" font-size="12.800">Neuilly-</text><text x="1479" y="562" font-size="12.800">le-Grand</text><text x="1253" y="684" font-size="13.200" textLength="37">Vitry-</text><text x="1240" y="698" font-size="13.200" textLength="63">sur-Seine</text><text x="1355" y="705.300" font-size="15.800" textLength="51.500">Créteil</text><text x="1469.500" y="724" font-size="10.300" letter-spacing=".4">Sucy-en-Brie</text><text x="1215.500" y="771.700" font-size="10.300" textLength="34" style="fill:#666;font-weight:500">Rungis</text>
<text x="984.500" y="457.500" font-size="13.200" textLength="57">Nanterre</text><text x="1094" y="452.700" font-size="13" textLength="63">Levallois-</text><text x="1106" y="466.300" font-size="13" textLength="40">Perret</text>
<text transform="translate(1242 570) rotate(52)" font-size="9.800" textLength="44" style="fill:#3f86c9;stroke:#cfeaf5;stroke-width:1px;font-weight:500">la Seine</text><text transform="translate(1195 386) rotate(-65)" font-size="9.800" textLength="26" style="fill:#3f86c9;stroke:none;font-weight:500">Seine</text>
</g>
<g fill="#111" stroke="#fff" stroke-width="1.200"><circle cx="826" cy="441" r="2.500"/><circle cx="1161" cy="325" r="2.500"/><circle cx="981.500" cy="699.500" r="2.100"/><circle cx="1449" cy="631" r="2.600"/><circle cx="1464.500" cy="726.500" r="2"/></g>
<rect x="1337" y="298" width="16" height="16" rx="1.500" fill="#3d94f0"/><path d="M1341 310l2.500-3.200-3.200-1.600 1-1 3.800.8 2.600-2.700q1.300-1 1.900-.6.500.7-.6 1.900l-2.700 2.600.8 3.800-1 1-1.600-3.200-2.500 2.600-.2 1.300-.6.300-.6-1-1-.6.300-.6z" fill="#fff"/>
<circle cx="1315.500" cy="358.500" r="7.500" fill="#42ae36" stroke="#eaf7e2" stroke-width=".7"/><path d="M1313 355l3 1.500 3-2.500M1316 356.500l-1 3.500 3 1.500v3M1315 360l-3.500 2.500M1311.500 354v3" stroke="#fff" stroke-width="1.300"/><circle cx="1316.500" cy="354.200" r="1.300" fill="#fff"/>
<circle cx="1068.500" cy="520.500" r="7.500" fill="#42ae36"/><path d="M1064.500 520.500q-1-3 1.500-3.500 2.500-3 5 0 3 .5 1.800 3.500-1.300 1.500-3.300.8v3.700h-2v-3.700q-2 .5-3-.8z" fill="#fff"/>
<g class="shield">
<g fill="#ff3c3c"><rect x="1040" y="262" width="28" height="15" rx="3"/><rect x="1068" y="286" width="24" height="17" rx="3"/><rect x="743" y="399" width="25" height="17" rx="3"/><rect x="1152" y="348" width="25" height="17" rx="3"/><rect x="1379" y="432" width="20" height="17" rx="3"/><rect x="1389" y="487" width="25" height="17" rx="3"/><rect x="961" y="572" width="24" height="17" rx="3"/><rect x="748" y="661" width="24" height="17" rx="3"/><rect x="1047" y="728" width="30" height="17" rx="3"/><rect x="1195" y="703" width="28" height="17" rx="3"/><rect x="1190" y="731" width="29" height="17" rx="3"/><rect x="1245" y="721" width="25" height="17" rx="3"/><rect x="1404" y="739" width="30" height="17" rx="3"/></g>
<g fill="#00a181"><rect x="1336" y="329" width="23" height="17" rx="3"/><rect x="826" y="570" width="19" height="17" rx="3"/></g>
<g fill="#ffc814" stroke="#e8a024"><rect x="1276.500" y="273.500" width="24" height="13" rx="2.500"/><rect x="769.500" y="550.500" width="28" height="16" rx="3"/><rect x="1152.500" y="400.500" width="17" height="13" rx="2.500"/></g>
<text x="1080" y="298.300" textLength="16" lengthAdjust="spacingAndGlyphs">A 15</text><text x="756.500" y="411.300" textLength="15.500" lengthAdjust="spacingAndGlyphs">A 14</text><text x="1164.500" y="360.300" textLength="17" lengthAdjust="spacingAndGlyphs">A 86</text><text x="1389" y="444.300" textLength="12" lengthAdjust="spacingAndGlyphs">A 3</text><text x="1401.500" y="499.300" textLength="17" lengthAdjust="spacingAndGlyphs">A 86</text><text x="973" y="584.300" textLength="16" lengthAdjust="spacingAndGlyphs">A 13</text><text x="760.500" y="673.300" textLength="16" lengthAdjust="spacingAndGlyphs">N 12</text><text x="1062" y="740.300" textLength="22" lengthAdjust="spacingAndGlyphs">N 385</text><text x="1209" y="715.300" textLength="19.500" lengthAdjust="spacingAndGlyphs">A 6 A</text><text x="1204.500" y="743.300" textLength="21" lengthAdjust="spacingAndGlyphs">A 106</text><text x="1257.500" y="733.300" textLength="17" lengthAdjust="spacingAndGlyphs">A 86</text><text x="1419" y="751.300" textLength="22" lengthAdjust="spacingAndGlyphs">N 406</text><text x="1347.500" y="341.300" textLength="15" lengthAdjust="spacingAndGlyphs">E 19</text><text x="835.500" y="582.300" textLength="10.500" lengthAdjust="spacingAndGlyphs">E 5</text>
<text x="1288.500" y="283.500" textLength="18" lengthAdjust="spacingAndGlyphs" style="fill:#333;font-size:9.500px">D 125</text><text x="783.500" y="562.300" textLength="21.500" lengthAdjust="spacingAndGlyphs" style="fill:#333">D 307</text><text x="1161" y="410.500" textLength="10" lengthAdjust="spacingAndGlyphs" style="fill:#333;font-size:9.500px">D 7</text>
</g>
<clipPath id="around"><path clip-rule="evenodd" d="M749 272h750v500H749zM937 368h375v133h-173l-14 15-14-15H937z"/></clipPath>
<g clip-path="url(#around)"><path d="M930 380h375l30 20-30 105H945z" fill="#4a4338" fill-opacity=".38" filter="url(#soft)"/></g>
<path d="M1111 501h28l-14 15.500z" fill="#faf9f8" fill-opacity=".94"/>
</svg>
<div class="popup position-absolute">
<div class="ttl">Paris</div>
<div><b>Latitude :</b> 48.862725 | <b>Longitude :</b> 2.287592</div>
<button class="btn btn-primary">Obtenir l'altitude</button>
<svg class="position-absolute" style="right:16px;top:12px" width="12" height="12" viewBox="0 0 12 12"><path d="M1.500 1.500l9 9M10.500 1.500l-9 9" stroke="#aaa" stroke-width="2"/></svg>
</div>
<div class="full position-absolute"><svg class="d-block" width="24" height="24" viewBox="0 0 24 24"><path fill="#333" stroke="#333" stroke-width=".4" d="M5 4.500h5L8.500 6l2.500 2.500L9.500 10 7 7.500 5.500 9zM19.500 4.500h-5L16 6l-2.500 2.500L15 10l2.500-2.500L19.500 9zM5 19h5l-1.500-1.500L11 15l-1.500-1.500L7 16l-2-1.500zM19.500 19h-5l1.500-1.500-2.500-2.500 1.500-1.500 2.500 2.500 2-1.500z"/></svg></div>
<div class="pill position-absolute" style="left:696px;top:9px"><svg class="d-block" width="45" height="24" viewBox="0 0 45 24"><path fill="#666" d="M16 7l4-1.500v11L16 18zM20.800 5.500l4 1.500v11l-4-1.500zM25.600 7l4-1.500v11l-4 1.500z"/></svg></div>
<div class="pill position-absolute" style="left:695px;top:467px"><svg class="d-block" width="45" height="24" viewBox="0 0 45 24"><path stroke="#666" stroke-width="1.600" d="M5 12h10M28.500 12h11M34 6.500v11"/></svg></div>
<svg class="brandline position-absolute" width="140" height="22" viewBox="757 746 140 22"><path fill="#444" d="M765.500 751.500q0-3 2.700-4 .2 3-2.700 4zM763.500 752.500q1 .5 1.800.2 2.700-1.200 4.200.8-2.700 2-.2 4.900-1.500 4.300-3.300 4.300-1.500-.7-2.700 0-2.300.5-4-3.700-1.300-4.300 1.200-6.200 1.300-.8 3-.3z"/><text x="771" y="762" font-size="16.500" font-weight="500" fill="#444" stroke="#f8f5f0" stroke-width="1" paint-order="stroke" textLength="41">Plans</text><text x="822" y="760" font-size="9" fill="#555" textLength="67" text-decoration="underline" style="font-family:'Liberation Sans',sans-serif">Mentions légales</text></svg>
</div>
</div>
</div>
</main>
<script src="https://cdn.jsdelivr.net/npm/bootstrap@5.3.0/dist/js/bootstrap.bundle.min.js"></script>
</body>
</html>
